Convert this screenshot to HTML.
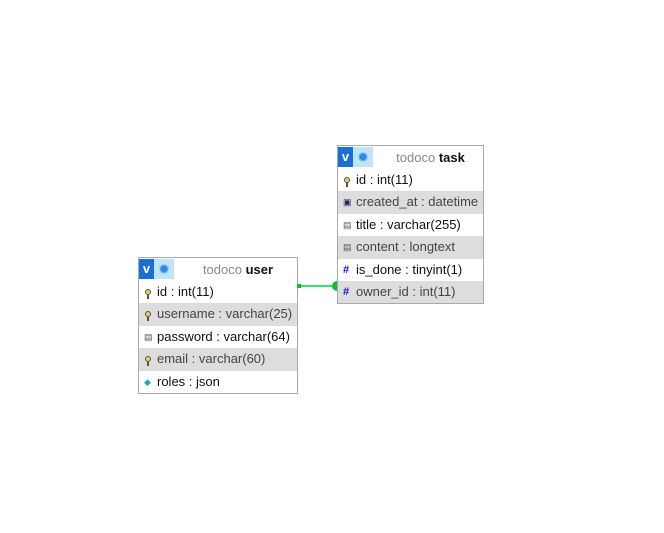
<!DOCTYPE html><html><head><style>
body{margin:0;width:664px;height:533px;background:#fff;position:relative;font-family:"Liberation Sans",Arial,sans-serif;font-size:13px;overflow:hidden}
.t{position:absolute;border:1px solid #aaa;background:#fff}
.h{height:23px;position:relative}
.v{position:absolute;left:0;top:1px;width:15px;height:20px;background:#1a6fd6;color:#fff;font-weight:bold;font-size:13px;text-align:center;line-height:20px}
.g{position:absolute;left:15px;top:1px;width:20px;height:20px;background:#bfe4fb;color:#2a8be0;text-align:center;line-height:20px;font-size:14px}
.ttl{position:absolute;left:40px;right:0;top:0;line-height:23px;text-align:center;color:#888}
.ttl b{color:#111}
.r{height:22.4px;line-height:22px;padding-left:18px;position:relative;color:#111;white-space:nowrap}
.r.a{background:#ddd;color:#444}
.i{position:absolute;left:5px;top:0;font-size:9px;color:#555}
.k{position:absolute;left:6px;top:8px;width:4px;height:4px;border:1px solid #553;border-radius:50%;background:#ec6}
.k:after{content:"";position:absolute;left:1px;top:5px;width:2px;height:4px;background:#553}
.hash{color:#11c;font-weight:bold;font-size:11px}
</style></head><body>
<div class="t" style="left:337px;top:145px;width:145px">
<div class="h"><div class="v">v</div><div class="g">✹</div><div class="ttl">todoco <b>task</b></div></div>
<div class="r"><span class="k"></span>id : int(11)</div>
<div class="r a"><span class="i" style="color:#226">▣</span>created_at : datetime</div>
<div class="r"><span class="i">▤</span>title : varchar(255)</div>
<div class="r a"><span class="i">▤</span>content : longtext</div>
<div class="r"><span class="i hash">#</span>is_done : tinyint(1)</div>
<div class="r a"><span class="i hash">#</span>owner_id : int(11)</div>
</div>
<div class="t" style="left:138px;top:257px;width:158px">
<div class="h"><div class="v">v</div><div class="g">✹</div><div class="ttl">todoco <b>user</b></div></div>
<div class="r"><span class="k"></span>id : int(11)</div>
<div class="r a"><span class="k"></span>username : varchar(25)</div>
<div class="r"><span class="i">▤</span>password : varchar(64)</div>
<div class="r a"><span class="k"></span>email : varchar(60)</div>
<div class="r"><span class="i" style="color:#2aa">◆</span>roles : json</div>
</div>
<svg style="position:absolute;left:0;top:0" width="664" height="533">
<line x1="298" y1="286" x2="336" y2="286" stroke="#3ddc7a" stroke-width="2"/>
<rect x="297" y="284" width="4" height="4" fill="#1b3"/>
<path d="M337 281 A5 5 0 0 0 337 291 Z" fill="#1b3"/>
</svg>
</body></html>
